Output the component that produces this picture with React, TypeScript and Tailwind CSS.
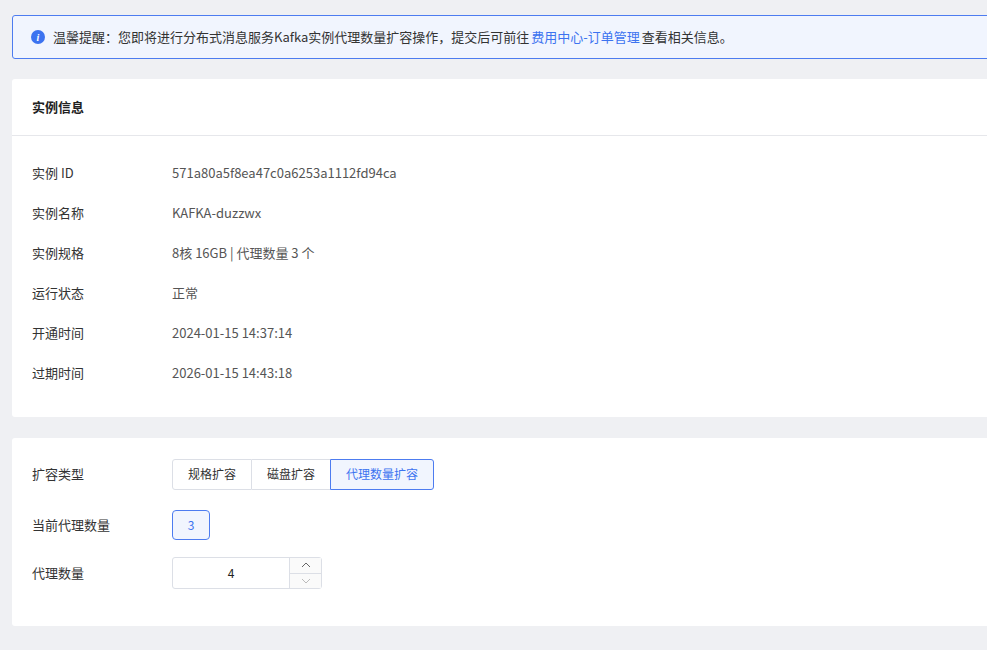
import React from "react";

const rows: [string, string][] = [
  ["实例 ID", "571a80a5f8ea47c0a6253a1112fd94ca"],
  ["实例名称", "KAFKA-duzzwx"],
  ["实例规格", "8核 16GB | 代理数量 3 个"],
  ["运行状态", "正常"],
  ["开通时间", "2024-01-15 14:37:14"],
  ["过期时间", "2026-01-15 14:43:18"],
];

export default function App() {
  return (
    <div className="w-[987px] h-[650px] overflow-hidden bg-[#eff0f3] pl-3 pt-[15px] text-[13px] text-[#333]" style={{ fontFamily: '"Noto Sans CJK SC", "Noto Sans", sans-serif' }}>
      <div className="w-[1000px] h-[44px] border border-[#4d7cf0] rounded-[3px] bg-[#f1f5fe] flex items-center pl-[18px] text-[13px] text-[#333]">
        <span className="w-[14px] h-[14px] rounded-full bg-[#3c73f0] text-white text-[10px] font-bold italic flex items-center justify-center mr-[8px]" style={{ fontFamily: '"Liberation Serif", serif' }}>i</span>
        温馨提醒：您即将进行分布式消息服务Kafka实例代理数量扩容操作，提交后可前往<span className="text-[#3c73f0] mx-[2px]">费用中心-订单管理</span>查看相关信息。
      </div>
      <div className="w-[1000px] mt-[20px] bg-white rounded-[3px] h-[338px]">
        <div className="h-[57px] border-b border-[#e6e7eb] flex items-center pl-[20px] font-bold text-[13px] text-[#222]">实例信息</div>
        <div className="pt-[17px]">
          {rows.map(([k, v]) => (
            <div key={k} className="h-[40px] flex items-center pl-[20px]">
              <span className="w-[140px] text-[#333]">{k}</span>
              <span className="text-[#555]">{v}</span>
            </div>
          ))}
        </div>
      </div>
      <div className="w-[1000px] mt-[21px] bg-white rounded-[3px] h-[188px] pl-[20px] pt-[20px]">
        <div className="flex items-center h-[32px]">
          <span className="w-[140px]">扩容类型</span>
          <div className="flex h-[31px] text-[12px]">
            <div className="px-[15px] flex items-center border border-[#dcdfe6] rounded-l-[3px]">规格扩容</div>
            <div className="px-[15px] flex items-center border-y border-[#dcdfe6]">磁盘扩容</div>
            <div className="px-[15px] flex items-center border border-[#4d7cf0] bg-[#f1f5fe] text-[#3c73f0] rounded-r-[3px]">代理数量扩容</div>
          </div>
        </div>
        <div className="flex items-center h-[32px] mt-[19px]">
          <span className="w-[140px]">当前代理数量</span>
          <div className="w-[38px] h-[30px] border border-[#4d7cf0] bg-[#f1f5fe] text-[#3c73f0] rounded-[4px] flex items-center justify-center text-[12px]">3</div>
        </div>
        <div className="flex items-center h-[32px] mt-[16px]">
          <span className="w-[140px]">代理数量</span>
          <div className="w-[150px] h-[32px] border border-[#dcdfe6] rounded-[3px] flex">
            <div className="flex-1 flex items-center justify-center text-[12px] text-[#222]">4</div>
            <div className="w-[32px] border-l border-[#dcdfe6] flex flex-col bg-[#fafafa]">
              <div className="flex-1 flex items-center justify-center border-b border-[#dcdfe6]">
                <svg width="10" height="6" viewBox="0 0 10 6"><path d="M1 5 L5 1 L9 5" fill="none" stroke="#666" strokeWidth="1" /></svg>
              </div>
              <div className="flex-1 flex items-center justify-center">
                <svg width="10" height="6" viewBox="0 0 10 6"><path d="M1 1 L5 5 L9 1" fill="none" stroke="#bbb" strokeWidth="1" /></svg>
              </div>
            </div>
          </div>
        </div>
      </div>
    </div>
  );
}
